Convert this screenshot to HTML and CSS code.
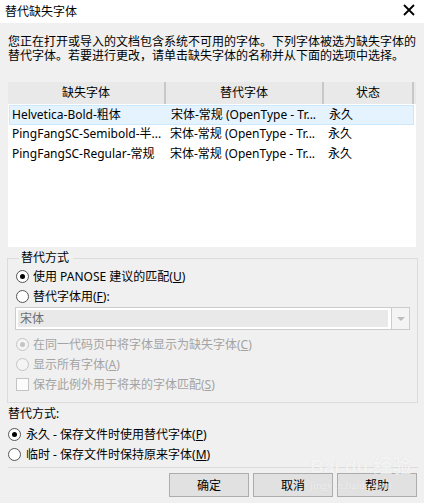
FILE: index.html
```html
<!DOCTYPE html>
<html lang="zh-CN">
<head>
    <meta charset="UTF-8">
    <title>替代缺失字体</title>
    <link rel="stylesheet" href="styles.css">
</head>
<body>

    <div class="titlebar">
        <span class="title">替代缺失字体</span>
        <svg class="close" width="12" height="12" viewBox="0 0 12 12">
            <path d="M1 1 L11 11 M11 1 L1 11" stroke="#000" stroke-width="1.8" fill="none"/>
        </svg>
    </div>

    <div class="dialog">
        <p class="desc">您正在打开或导入的文档包含系统不可用的字体。下列字体被选为缺失字体的替代字体。若要进行更改，请单击缺失字体的名称并从下面的选项中选择。</p>

        <!-- 缺失字体列表 -->
        <div class="list">
            <div class="list-head">
                <div class="hcell">缺失字体</div>
                <div class="hcell">替代字体</div>
                <div class="hcell">状态</div>
            </div>
            <div class="list-row selected">
                <div class="cell">Helvetica-Bold-粗体</div>
                <div class="cell">宋体-常规 (OpenType - Tr...</div>
                <div class="cell">永久</div>
            </div>
            <div class="list-row">
                <div class="cell">PingFangSC-Semibold-半...</div>
                <div class="cell">宋体-常规 (OpenType - Tr...</div>
                <div class="cell">永久</div>
            </div>
            <div class="list-row">
                <div class="cell">PingFangSC-Regular-常规</div>
                <div class="cell">宋体-常规 (OpenType - Tr...</div>
                <div class="cell">永久</div>
            </div>
        </div>

        <fieldset class="group">
            <legend>替代方式</legend>
            <div class="option first">
                <span class="radio checked"></span>使用 PANOSE 建议的匹配(<u>U</u>)
            </div>
            <div class="option">
                <span class="radio"></span>替代字体用(<u>F</u>):
            </div>
            <div class="combo">
                <div class="combo-field">宋体</div>
                <div class="combo-arrow"></div>
            </div>
            <div class="option disabled sub">
                <span class="radio checked"></span>在同一代码页中将字体显示为缺失字体(<u>C</u>)
            </div>
            <div class="option disabled">
                <span class="radio"></span>显示所有字体(<u>A</u>)
            </div>
            <div class="option disabled">
                <span class="checkbox"></span>保存此例外用于将来的字体匹配(<u>S</u>)
            </div>
        </fieldset>

        <div class="label">替代方式:</div>
        <div class="option plain">
            <span class="radio checked"></span>永久 - 保存文件时使用替代字体(<u>P</u>)
        </div>
        <div class="option plain">
            <span class="radio"></span>临时 - 保存文件时保持原来字体(<u>M</u>)
        </div>

        <div class="separator"></div>

        <div class="buttons">
            <button class="btn">确定</button>
            <button class="btn">取消</button>
            <button class="btn">帮助</button>
        </div>

        <div class="watermark">
            <div class="wm-big">Bai du 经验</div>
            <div class="wm-small">jingyan.baidu.com</div>
        </div>
    </div>

</body>
</html>
```

FILE: styles.css
```css
body {
    margin: 0;
    background-color: #ffffff;
    font-family: "Noto Sans", "Noto Sans CJK SC", sans-serif;
    font-size: 12px;
    color: #000;
}

.titlebar {
    height: 23px;
    display: flex;
    align-items: center;
    justify-content: space-between;
    padding: 0 12px 0 5px;
    background-color: #fff;
}

.title {
    line-height: 14px;
    margin-top: 1px;
}

.close {
    margin-top: -4px;
}

.dialog {
    position: relative;
    width: 424px;
    height: 480px;
    background-color: #f0f0f0;
    overflow: hidden;
}

.desc {
    margin: 0;
    padding: 12px 8px 0 8px;
    line-height: 14px;
}

.list {
    margin: 19px 0 0 8px;
    width: 408px;
    height: 165px;
    background-color: #fff;
}

.list-head {
    display: grid;
    grid-template-columns: 158px 158px 90px;
    height: 22px;
    background-color: #e9e9e9;
}

.hcell {
    border-right: 2px solid #c8c8c8;
    text-align: center;
    line-height: 22px;
}

.list-row {
    display: grid;
    grid-template-columns: 158px 158px 90px;
    height: 20px;
    margin: 0 2px 0 1px;
    box-sizing: border-box;
}

.list-row.selected {
    margin-top: 1px;
    background-color: #e5f3ff;
    border: 1px solid #cce8ff;
}

.cell {
    padding-left: 3px;
    line-height: 18px;
    white-space: nowrap;
    overflow: hidden;
}

.list-row.selected .cell:first-child {
    padding-left: 2px;
}

.group {
    margin: 4px 0 0 7px;
    width: 411px;
    padding: 0 7px 4px 7px;
    border: 1px solid #dcdcdc;
    box-sizing: border-box;
    height: 152px;
}

.group legend {
    padding: 0 4px 0 2px;
    margin-left: 4px;
    line-height: 14px;
}

.option {
    display: flex;
    align-items: center;
    height: 20px;
    margin-left: 1px;
}

.option.first {
    margin-top: 1px;
}

.option.sub {
    margin-top: 4px;
}

.option.disabled {
    color: #a3a3a3;
}

.radio {
    width: 11px;
    height: 11px;
    border: 1px solid #555;
    border-radius: 50%;
    background-color: #fff;
    margin-right: 4px;
    position: relative;
    flex-shrink: 0;
}

.radio.checked::after {
    content: "";
    position: absolute;
    left: 3px;
    top: 3px;
    width: 5px;
    height: 5px;
    border-radius: 50%;
    background-color: #000;
}

.disabled .radio {
    border-color: #c4c4c4;
    background-color: #f4f4f4;
}

.disabled .radio.checked::after {
    background-color: #c4c4c4;
}

.checkbox {
    width: 11px;
    height: 11px;
    border: 1px solid #c4c4c4;
    background-color: #fcfcfc;
    margin-right: 4px;
    flex-shrink: 0;
}

.combo {
    display: flex;
    height: 23px;
    margin-top: 1px;
    border: 1px solid #cccccc;
    background-color: #fff;
    box-sizing: border-box;
}

.combo-field {
    flex: 1;
    margin: 2px 3px 2px 2px;
    padding-left: 2px;
    background-color: #e9e9e9;
    color: #6d6d6d;
    line-height: 17px;
}

.combo-arrow {
    width: 17px;
    border-left: 1px solid #cccccc;
    background-color: #f4f4f4;
    position: relative;
}

.combo-arrow::after {
    content: "";
    position: absolute;
    left: 5px;
    top: 9px;
    border-left: 4px solid transparent;
    border-right: 4px solid transparent;
    border-top: 4px solid #bdbdbd;
}

.label {
    padding-left: 8px;
    line-height: 20px;
    margin-top: 1px;
}

.option.plain {
    margin-left: 8px;
}

.option.plain .radio {
    margin-right: 5px;
}

.separator {
    height: 1px;
    margin: 3px 6px 0 8px;
    background-color: #dcdcdc;
}

.buttons {
    display: flex;
    justify-content: flex-end;
    gap: 4px;
    margin: 5px 7px 0 0;
}

.btn {
    width: 80px;
    height: 24px;
    padding: 0;
    font-family: inherit;
    font-size: 12px;
    color: #000;
    background-color: #e1e1e1;
    border: 1px solid #adadad;
}

/* 百度经验水印 */
.watermark {
    position: absolute;
    left: 310px;
    top: 433px;
    color: rgba(255, 255, 255, 0.7);
    text-shadow: 0 0 1px rgba(0, 0, 0, 0.1);
    pointer-events: none;
}

.wm-big {
    font-family: "Liberation Sans", "Noto Sans CJK SC", sans-serif;
    font-size: 19px;
    font-weight: bold;
    line-height: 22px;
}

.wm-small {
    margin-top: 0;
    font-family: "Liberation Serif", serif;
    font-size: 11px;
    line-height: 14px;
}
```
